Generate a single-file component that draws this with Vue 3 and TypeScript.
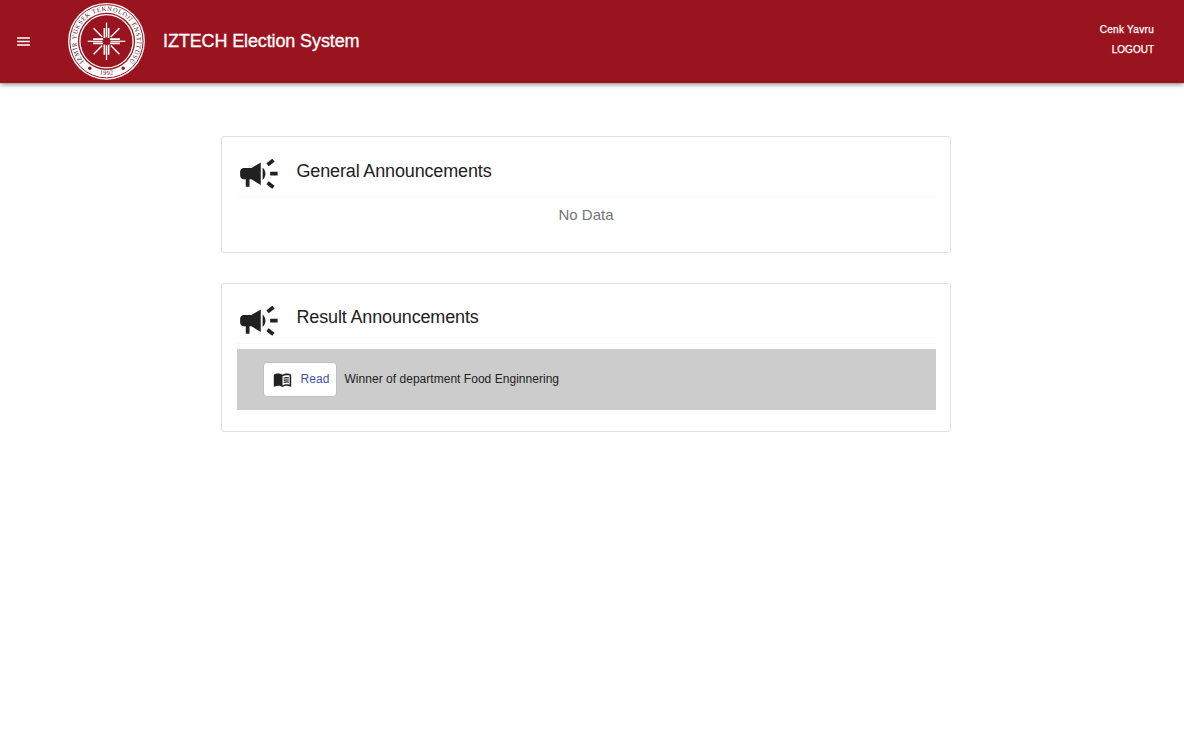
<script setup lang="ts">
interface Announcement {
  id: number
  text: string
}

interface Section {
  key: string
  title: string
  items: Announcement[]
}

const user = 'Cenk Yavru'

const sections: Section[] = [
  { key: 'general', title: 'General Announcements', items: [] },
  {
    key: 'result',
    title: 'Result Announcements',
    items: [{ id: 1, text: 'Winner of department Food Enginnering' }],
  },
]

const quarterTurns = [0, 90, 180, 270]
const diagonals = [45, 135, 225, 315]
</script>

<template>
  <div class="page">
    <header class="app-bar">
      <button class="menu" aria-label="menu">
        <svg viewBox="0 0 24 24" width="17" height="17">
          <path fill="#fff" d="M3 18h18v-2H3v2zm0-5h18v-2H3v2zm0-7v2h18V6H3z" />
        </svg>
      </button>
      <svg class="logo" viewBox="-39.5 -39.3 78 78" width="78" height="78">
        <defs>
          <path id="seal-top" d="M-21.6 21.2 A30.3 30.3 0 1 1 21.6 21.2" />
          <path id="seal-bottom" d="M-20 27 A33.6 33.6 0 0 0 20 27" />
        </defs>
        <circle r="38.4" fill="#fff" />
        <circle r="36.6" fill="none" stroke="#9a1420" stroke-width="1" />
        <circle r="28.6" fill="#9a1420" />
        <circle r="26.6" fill="none" stroke="#fff" stroke-width="1.3" />
        <text class="seal-text">
          <textPath href="#seal-top" startOffset="50%" text-anchor="middle" textLength="139">İZMİR YÜKSEK TEKNOLOJİ ENSTİTÜSÜ</textPath>
        </text>
        <text class="seal-text">
          <textPath href="#seal-bottom" startOffset="50%" text-anchor="middle" textLength="14">1992</textPath>
        </text>
        <circle cx="-16.7" cy="27" r="1.7" fill="#9a1420" />
        <circle cx="16.7" cy="27" r="1.7" fill="#9a1420" />
        <g fill="none" stroke="#fff">
          <g v-for="turn in quarterTurns" :key="turn" :transform="`rotate(${turn})`">
            <path stroke-width="1.2" d="M0 -18.8V-4" />
            <path stroke-width="1.7" d="M-2.1 -13.4V-3.4M2.1 -13.4V-3.4" />
          </g>
          <path
            v-for="angle in diagonals"
            :key="angle"
            :transform="`rotate(${angle})`"
            stroke-width="1.4"
            d="M0 -18.3V-6"
          />
        </g>
      </svg>
      <h1 class="brand">IZTECH Election System</h1>
      <div class="account">
        <span class="user">{{ user }}</span>
        <a class="logout">LOGOUT</a>
      </div>
    </header>

    <main class="content">
      <section v-for="section in sections" :key="section.key" class="card" :class="section.key">
        <div class="card-head">
          <svg class="megaphone" viewBox="0 0 24 24" width="45" height="45">
            <path
              fill="#212121"
              transform="translate(0.2 0.1)"
              d="M18 11v2h4v-2h-4zm-2 6.61c.96.71 2.21 1.65 3.2 2.39.4-.53.8-1.07 1.2-1.6-.99-.74-2.24-1.68-3.2-2.4-.4.54-.8 1.08-1.2 1.61zM20.4 5.6c-.4-.53-.8-1.07-1.2-1.6-.99.74-2.24 1.68-3.2 2.4.4.53.8 1.07 1.2 1.6.96-.72 2.21-1.65 3.2-2.4zM4 9c-1.1 0-2 .9-2 2v2c0 1.1.9 2 2 2h1v4h2v-4h1l5 3V6L8 9H4zm11.5 3c0-1.33-.58-2.53-1.5-3.35v6.69c.92-.81 1.5-2.01 1.5-3.34z"
            />
          </svg>
          <h2 class="title">{{ section.title }}</h2>
        </div>
        <p v-if="section.items.length === 0" class="empty">No Data</p>
        <div v-for="item in section.items" :key="item.id" class="row">
          <button class="read">
            <svg viewBox="0 0 24 24" width="19" height="19">
              <path
                fill="#212121"
                d="M21 5c-1.11-.35-2.33-.5-3.5-.5-1.95 0-4.05.4-5.5 1.5-1.45-1.1-3.55-1.5-5.5-1.5S2.45 4.9 1 6v14.65c0 .25.25.5.5.5.1 0 .15-.05.25-.05C3.1 20.45 5.05 20 6.5 20c1.95 0 4.05.4 5.5 1.5 1.35-.85 3.8-1.5 5.5-1.5 1.65 0 3.35.3 4.75 1.05.1.05.15.05.25.05.25 0 .5-.25.5-.5V6c-.6-.45-1.25-.75-2-1zm0 13.5c-1.1-.35-2.3-.5-3.5-.5-1.7 0-4.15.65-5.5 1.5V8c1.35-.85 3.8-1.5 5.5-1.5 1.2 0 2.4.15 3.5.5v11.5z"
              />
              <path
                fill="none"
                stroke="#212121"
                stroke-width="1.5"
                d="M13.5 10.4c1.8-.7 4.2-.9 6.5-.5M13.5 13.1c1.8-.7 4.2-.9 6.5-.5M13.5 15.8c1.8-.7 4.2-.9 6.5-.5"
              />
            </svg>
            <span class="label">Read</span>
          </button>
          <span class="row-text">{{ item.text }}</span>
        </div>
      </section>
    </main>
  </div>
</template>

<style>
body {
  margin: 0;
  background: #fff;
}
</style>

<style scoped>
.page {
  min-height: 740px;
  font-family: "Liberation Sans", Arial, sans-serif;
  color: #212121;
}

.app-bar {
  display: flex;
  align-items: center;
  box-sizing: border-box;
  height: 83px;
  padding: 0 30px 0 15px;
  background: #9a1420;
  color: #fff;
  box-shadow: 0 1px 5px rgba(0, 0, 0, 0.55);
}

.menu {
  display: flex;
  padding: 0;
  border: 0;
  background: none;
}

.logo {
  margin: 0 18px 1px 35px;
}

.seal-text {
  font-family: "Liberation Serif", serif;
  font-size: 6.4px;
  fill: #3a1a20;
}

.brand {
  margin: 0 0 2px;
  font-size: 18px;
  font-weight: 400;
  line-height: 24px;
  letter-spacing: -0.12px;
  -webkit-text-stroke: 0.3px #fff;
}

.account {
  display: flex;
  flex-direction: column;
  align-items: flex-end;
  margin-left: auto;
  padding-bottom: 4px;
  font-size: 10px;
  line-height: 20px;
  -webkit-text-stroke: 0.25px #fff;
}

.user {
  letter-spacing: 0.3px;
}

.content {
  display: flex;
  flex-direction: column;
  gap: 30px;
  width: 730px;
  margin: 53px 0 0 221px;
}

.card {
  box-sizing: border-box;
  height: 117px;
  padding: 14px 14.5px 0 14px;
  border: 1px solid #e2e2e2;
  border-radius: 3px;
}

.card.result {
  height: 149px;
}

.card-head {
  display: flex;
  gap: 15.5px;
  height: 45px;
  margin-left: 1px;
  border-bottom: 1px solid #f8f8f8;
}

.megaphone {
  margin-left: -1px;
}

.title {
  margin: 8px 0 0;
  font-size: 18px;
  font-weight: 400;
  line-height: 24px;
  letter-spacing: -0.15px;
}

.result .title {
  margin-top: 7px;
}

.empty {
  margin: 8px 0 0 0.5px;
  font-size: 15px;
  line-height: 20px;
  text-align: center;
  color: #757575;
}

.row {
  display: flex;
  align-items: center;
  box-sizing: border-box;
  height: 61px;
  margin: 5px 0 0 1px;
  padding-left: 26px;
  background: #ccc;
}

.read {
  display: flex;
  align-items: center;
  gap: 8px;
  box-sizing: border-box;
  width: 74px;
  height: 35px;
  padding: 0 0 0 9px;
  border: 1px solid #c0c0c0;
  border-radius: 4px;
  background: #fff;
  color: #3f51b5;
  font: 12px "Liberation Sans", Arial, sans-serif;
}

.label {
  padding: 0 0 2px 0.5px;
  letter-spacing: 0.1px;
}

.row-text {
  margin-left: 7.5px;
  padding-bottom: 2px;
  font-size: 12px;
  letter-spacing: 0.03px;
}
</style>
